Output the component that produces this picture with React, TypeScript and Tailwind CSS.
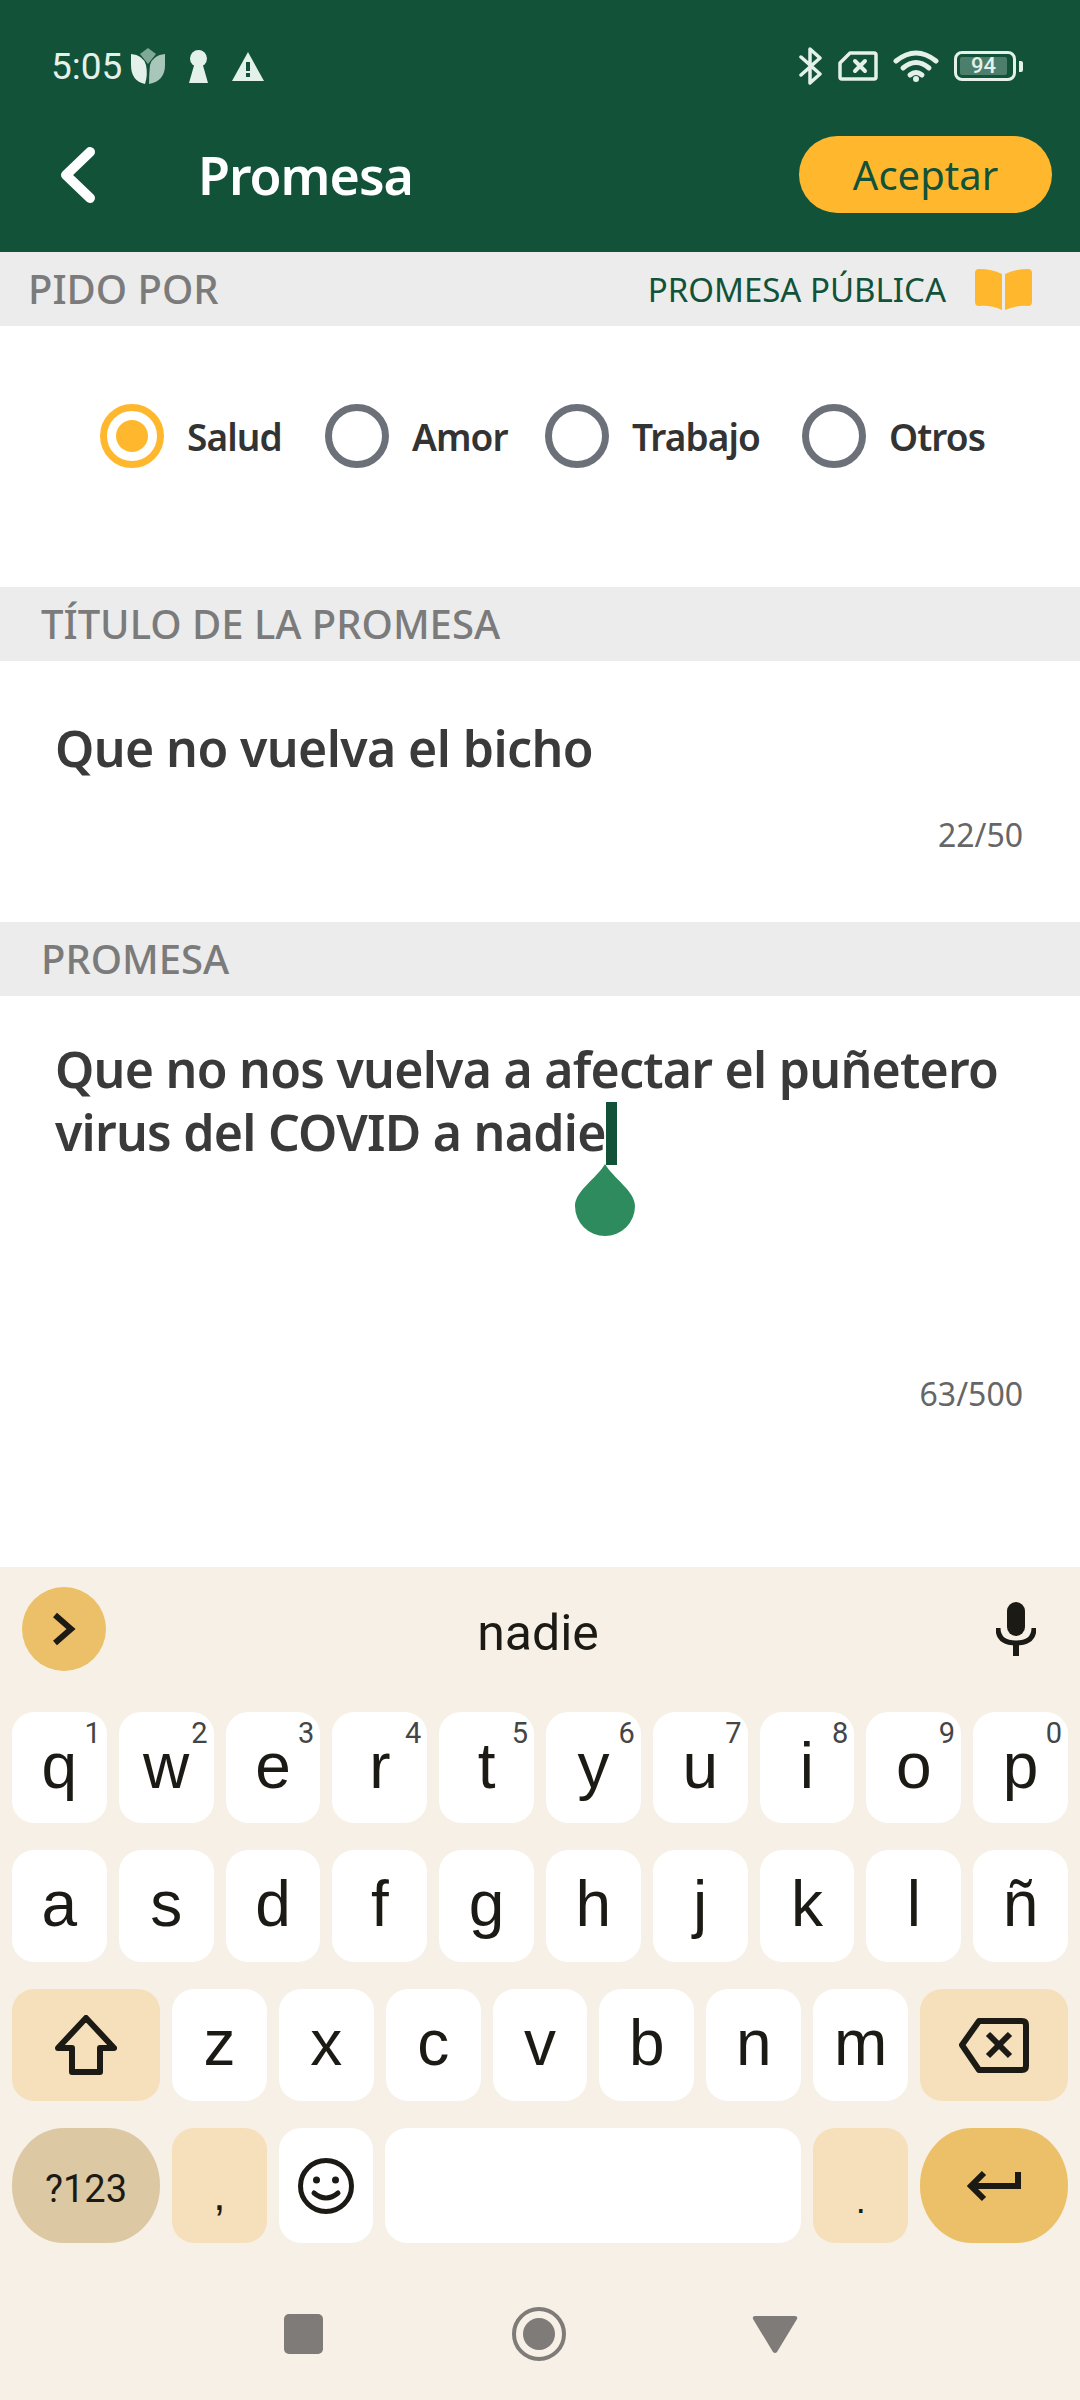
const topRow = [
  ["q", "1"],
  ["w", "2"],
  ["e", "3"],
  ["r", "4"],
  ["t", "5"],
  ["y", "6"],
  ["u", "7"],
  ["i", "8"],
  ["o", "9"],
  ["p", "0"],
];
const midRow = ["a", "s", "d", "f", "g", "h", "j", "k", "l", "ñ"];
const lowRow = ["z", "x", "c", "v", "b", "n", "m"];

function Band({ title, right }: { title: string; right?: boolean }) {
  return (
    <div className={`h-[74px] bg-[#ececec] flex items-center justify-between ${right ? "pl-[28px]" : "pl-[41px]"}`}>
      <span className="text-[40px] font-medium text-[#7b7b7b] leading-none">{title}</span>
      {right && (
        <div className="flex items-center pr-[48px]">
          <span className="text-[33px] text-[#115239] leading-none">PROMESA PÚBLICA</span>
          <svg width="57" height="41" viewBox="0 0 57 41" className="ml-[29px]" fill="#ffb82e">
            <path d="M4 0Q17 0 27 5V41Q16 36 4 37Q0 37 0 33V4Q0 0 4 0Z" />
            <path d="M53 0Q40 0 30 5V41Q41 36 53 37Q57 37 57 33V4Q57 0 53 0Z" />
          </svg>
        </div>
      )}
    </div>
  );
}

function Radio({ label, on, width }: { label: string; on?: boolean; width: string }) {
  return (
    <div className="flex items-center">
      <div
        className={`w-[64px] h-[64px] rounded-full border-[7px] flex items-center justify-center ${
          on ? "border-[#ffb82e]" : "border-[#6b7079]"
        }`}
      >
        {on && <div className="w-[32px] h-[32px] rounded-full bg-[#ffb82e]" />}
      </div>
      <span className={`ml-[23px] text-[37px] font-semibold text-[#333] leading-none tracking-[-0.9px] whitespace-nowrap ${width}`}>
        {label}
      </span>
    </div>
  );
}

function Key({ letter, num }: { letter: string; num?: string }) {
  return (
    <div className="relative flex-1 rounded-[22px] bg-white flex items-center justify-center text-[64px] leading-none text-[#1c1a15] pb-[4px]">
      {letter}
      {num && (
        <span className="absolute top-[7px] right-[6px] text-[29px] leading-none text-[#454545] font-['Roboto']">
          {num}
        </span>
      )}
    </div>
  );
}

export default function App() {
  return (
    <div className="w-[1080px] h-[2400px] bg-white flex flex-col overflow-hidden font-['Noto_Sans',sans-serif]">
      <header className="h-[252px] bg-[#115239] shrink-0">
        <div className="h-[36px] pt-[48px] box-content flex items-center pl-[51px] pr-[57px] text-[#e4f0ea] font-['Roboto']">
          <span className="text-[37px] leading-none w-[71px]">5:05</span>
          <svg width="34" height="36" viewBox="0 0 34 36" className="ml-[9px]">
            <path d="M9 6L17 0L25 6L17 16Z" fill="#7fa897" />
            <path d="M0 6Q12 7 15 17Q17 27 14 36Q0 33 0 17Z" fill="#e4f0ea" />
            <path d="M34 6Q22 7 19 17Q18 27 18 36Q34 33 34 17Z" fill="#a9c6ba" />
          </svg>
          <svg width="19" height="33" viewBox="0 0 19 33" className="ml-[24px]" fill="#e4f0ea">
            <circle cx="9.5" cy="8.5" r="8.5" />
            <path d="M6 12H13L19 33H0Z" />
          </svg>
          <svg width="32" height="29" viewBox="0 0 32 29" className="ml-[24px]">
            <path d="M16 0L32 29H0Z" fill="#e4f0ea" />
            <rect x="14" y="10" width="4" height="9" fill="#115239" />
            <rect x="14" y="21" width="4" height="4" fill="#115239" />
          </svg>
          <svg width="23" height="38" viewBox="0 0 23 38" className="ml-auto" fill="none" stroke="#e4f0ea" strokeWidth="3.5" strokeLinecap="round" strokeLinejoin="round">
            <path d="M2 10L21 27L11 36V2L21 11L2 28" />
          </svg>
          <svg width="40" height="30" viewBox="0 0 40 30" className="ml-[16px]" fill="none" stroke="#e4f0ea" strokeWidth="3.5" strokeLinejoin="round">
            <path d="M2 12L12 2H36Q38 2 38 4V26Q38 28 36 28H4Q2 28 2 26Z" />
            <path d="M17 10L27 20M27 10L17 20" strokeLinecap="round" strokeWidth="4" />
          </svg>
          <svg width="46" height="33" viewBox="0 0 46 33" className="ml-[15px]" fill="none" stroke="#e4f0ea" strokeWidth="5" strokeLinecap="round">
            <path d="M3 11Q23 -5 43 11" />
            <path d="M10 18Q23 7 36 18" />
            <path d="M17 25Q23 20 29 25" />
            <circle cx="23" cy="29" r="2" fill="#e4f0ea" strokeWidth="2" />
          </svg>
          <div className="ml-[15px] flex items-center">
            <div className="w-[62px] h-[30px] rounded-[8px] border-[3px] border-[#e4f0ea] p-[3px]">
              <div className="w-[47px] h-full rounded-[2px] bg-[#4b7f6c] flex items-center justify-center text-[22px] font-medium leading-none">
                94
              </div>
            </div>
            <div className="ml-[3px] w-[4px] h-[11px] rounded-r-[2px] bg-[#e4f0ea]" />
          </div>
        </div>
        <div className="mt-[52px] pl-[60px] pr-[28px] flex items-center">
          <svg width="35" height="56" viewBox="0 0 35 56" fill="none" stroke="#fff" strokeWidth="10" strokeLinecap="round" strokeLinejoin="round">
            <path d="M30 5L6 28L30 51" />
          </svg>
          <h1 className="ml-[103px] text-[52px] font-semibold text-white leading-none tracking-[-1px]">Promesa</h1>
          <button className="ml-auto w-[253px] h-[77px] rounded-full bg-[#ffb82e] text-[40px] text-[#115239] leading-none">
            Aceptar
          </button>
        </div>
      </header>

      <Band title="PIDO POR" right />
      <section className="h-[261px] flex items-start pl-[100px] pt-[78px] gap-[41px]">
        <Radio label="Salud" on width="w-[97px]" />
        <Radio label="Amor" width="w-[92px]" />
        <Radio label="Trabajo" width="w-[129px]" />
        <Radio label="Otros" width="w-[94px]" />
      </section>

      <Band title="TÍTULO DE LA PROMESA" />
      <section className="h-[261px] px-[55px] pt-[55px] flex flex-col">
        <p className="text-[50px] font-semibold text-[#3a3a3a] leading-[64px] tracking-[-0.6px]">Que no vuelva el bicho</p>
        <p className="mt-[39px] text-right text-[32px] text-[#666] leading-none pr-[2px]">22/50</p>
      </section>

      <Band title="PROMESA" />
      <section className="h-[571px] px-[55px] pt-[42px] flex flex-col">
        <p className="text-[50px] font-semibold text-[#3a3a3a] leading-[63px] tracking-[-0.75px]">
          Que no nos vuelva a afectar el puñetero
          <br />
          virus del COVID a nadie
          <span className="relative inline-block w-[11px] h-[63px] bg-[#115239] align-[-14px]">
            <svg width="60" height="72" viewBox="0 0 60 72" className="absolute left-[-31px] top-[62px]" fill="#2e8b5e">
              <path d="M30 0C38 14 60 27 60 42A30 30 0 0 1 0 42C0 27 22 14 30 0Z" />
            </svg>
          </span>
        </p>
        <p className="mt-[213px] text-right text-[32px] text-[#666] leading-none pr-[2px]">63/500</p>
      </section>

      <section className="flex-1 bg-[#f7f0e6] flex flex-col font-['Liberation_Sans',sans-serif] text-[#1c1a15]">
        <div className="h-[145px] shrink-0 relative flex items-center justify-center">
          <span className="text-[50px] leading-none font-['Roboto'] pb-[14px] pr-[4px]">nadie</span>
          <div className="absolute left-[22px] top-[20px] w-[84px] h-[84px] rounded-full bg-[#ebc069] flex items-center justify-center">
            <svg width="24" height="34" viewBox="0 0 24 34" fill="none" stroke="#1c1a15" strokeWidth="6">
              <path d="M3 3L19 17L3 31" />
            </svg>
          </div>
          <svg width="40" height="54" viewBox="0 0 40 54" className="absolute left-[996px] top-[35px]" fill="#1c1a15">
            <rect x="11" y="0" width="18" height="34" rx="9" />
            <path d="M2 26Q2 41 20 41Q38 41 38 26" fill="none" stroke="#1c1a15" strokeWidth="5" />
            <rect x="17" y="40" width="6" height="14" />
          </svg>
        </div>
        <div className="px-[12px] flex flex-col">
          <div className="h-[111px] flex gap-[12px]">
            {topRow.map(([l, n]) => (
              <Key key={l} letter={l} num={n} />
            ))}
          </div>
          <div className="mt-[27px] h-[112px] flex gap-[12px]">
            {midRow.map((l) => (
              <Key key={l} letter={l} />
            ))}
          </div>
          <div className="mt-[27px] h-[112px] flex gap-[12px]">
            <div className="w-[148px] rounded-[22px] bg-[#f6e0bb] flex items-center justify-center">
              <svg width="62" height="60" viewBox="0 0 62 60" fill="none" stroke="#1c1a15" strokeWidth="6" strokeLinejoin="round">
                <path d="M31 3L59 33H45V57H17V33H3Z" />
              </svg>
            </div>
            {lowRow.map((l) => (
              <Key key={l} letter={l} />
            ))}
            <div className="w-[148px] rounded-[22px] bg-[#f6e0bb] flex items-center justify-center">
              <svg width="70" height="55" viewBox="0 0 70 55" fill="none" stroke="#1c1a15" strokeWidth="6" strokeLinejoin="round">
                <path d="M3 27L20 3H63Q67 3 67 7V48Q67 52 63 52H20Z" />
                <path d="M29 16L51 38M51 16L29 38" />
              </svg>
            </div>
          </div>
          <div className="mt-[27px] h-[115px] flex gap-[12px]">
            <div className="w-[148px] rounded-[52px/57px] bg-[#dcc8a2] flex items-center justify-center pt-[6px] text-[38px] leading-none font-['Roboto']">
              ?123
            </div>
            <div className="flex-1 rounded-[22px] bg-[#f6e0bb] flex items-end justify-center pb-[26px] text-[44px] leading-none">,</div>
            <div className="flex-1 rounded-[22px] bg-white flex items-center justify-center">
              <svg width="56" height="56" viewBox="0 0 56 56" fill="none" stroke="#1c1a15" strokeWidth="5">
                <circle cx="28" cy="28" r="25.5" />
                <circle cx="18.5" cy="22" r="3.5" fill="#1c1a15" stroke="none" />
                <circle cx="37.5" cy="22" r="3.5" fill="#1c1a15" stroke="none" />
                <path d="M16 35Q28 45 40 35" strokeLinecap="round" />
              </svg>
            </div>
            <div className="w-[416px] rounded-[22px] bg-white" />
            <div className="flex-1 rounded-[22px] bg-[#f6e0bb] flex items-end justify-center pb-[24px] text-[36px] leading-none">.</div>
            <div className="w-[148px] rounded-[52px/57px] bg-[#ebc069] flex items-center justify-center">
              <svg width="54" height="32" viewBox="0 0 54 32" fill="none" stroke="#1c1a15" strokeWidth="6">
                <path d="M17 3L4 16L17 29" />
                <path d="M4 16H51V2" />
              </svg>
            </div>
          </div>
        </div>
        <nav className="flex-1 relative">
          <div className="absolute left-[284px] top-[71px] w-[39px] h-[40px] rounded-[5px] bg-[#7f7b78]" />
          <div className="absolute left-[512px] top-[64px] w-[54px] h-[54px] rounded-full border-[4px] border-[#7f7b78] flex items-center justify-center">
            <div className="w-[32px] h-[32px] rounded-full bg-[#7f7b78]" />
          </div>
          <svg width="46" height="38" viewBox="0 0 46 38" className="absolute left-[752px] top-[73px]" fill="#7f7b78">
            <path d="M3 0H43Q46 0 45 3L25 36Q23 38 21 36L1 3Q0 0 3 0Z" />
          </svg>
        </nav>
      </section>
    </div>
  );
}
